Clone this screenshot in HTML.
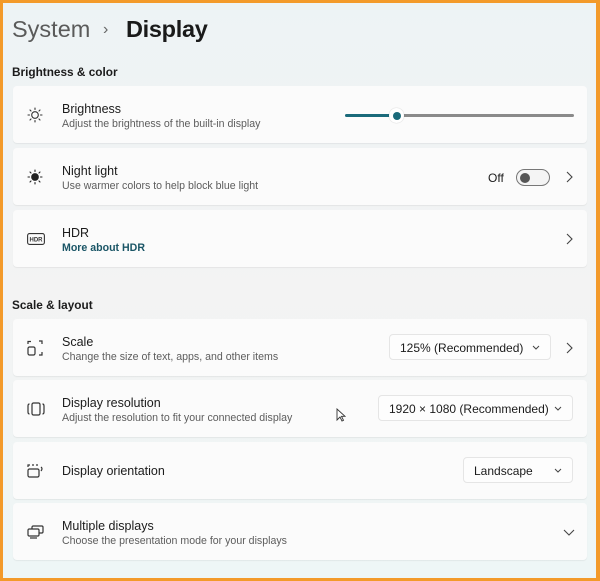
<!DOCTYPE html>
<html><head><meta charset="utf-8"><style>
*{margin:0;padding:0;box-sizing:border-box}
body{width:600px;height:581px;overflow:hidden;font-family:"Segoe UI","Liberation Sans",sans-serif;background:#f39a2a;position:relative}
.win{position:absolute;left:3px;top:3px;width:593px;height:575px;background:linear-gradient(180deg,#edf3f5 0%,#f3f3f3 50%,#eef6f6 100%);}
.t{position:absolute;white-space:nowrap}
.card{position:absolute;left:10px;width:574px;height:57px;background:#fbfbfb;border-radius:4px;box-shadow:0 1px 1px rgba(0,0,0,.06)}
.card .ic{position:absolute;left:14px;top:50%;transform:translateY(-50%)}
.card .ti{position:absolute;left:49px;font-size:12.5px;color:#1b1b1b}
.card .su{position:absolute;left:49px;font-size:10.6px;color:#5d5d5d}
.chev{position:absolute;right:14px;top:50%;transform:translateY(-50%)}
.dd{position:absolute;height:26px;background:#fdfdfd;border:1px solid #e5e5e5;border-radius:4px;font-size:12px;color:#1b1b1b;padding:6px 10px;top:15px}
.dd svg{position:absolute;right:10px;top:10px}
</style></head><body><div class="win">
<div class="t" style="left:9px;top:13px;font-size:23.5px;color:#5a5a5a">System</div>
<div class="t" style="left:100px;top:18px;font-size:16px;color:#666">›</div>
<div class="t" style="left:123px;top:13px;font-size:23.5px;color:#1a1a1a;font-weight:600;letter-spacing:-.3px">Display</div>
<div class="t" style="left:9px;top:62px;font-size:11.8px;color:#1b1b1b;font-weight:600">Brightness &amp; color</div>

<div class="card" style="top:83px">
<svg class="ic" width="16" height="16" viewBox="0 0 16 16" fill="none" stroke="#333" stroke-width="1.1"><circle cx="8" cy="8" r="3.3"/><path d="M8 1v1.5M8 13.5V15M1 8h1.5M13.5 8H15M3 3l1 1M12 12l1 1M3 13l1-1M12 4l1-1" stroke-linecap="round"/></svg>
<div class="ti" style="top:16px">Brightness</div><div class="su" style="top:32px">Adjust the brightness of the built-in display</div>
<div style="position:absolute;left:332px;top:28px;width:50px;height:3px;background:#1a6a7a;border-radius:2px"></div>
<div style="position:absolute;left:390px;top:28px;width:171px;height:3px;background:#8a8a8a;border-radius:2px"></div>
<div style="position:absolute;left:376px;top:22px;width:15px;height:15px;background:#fff;border-radius:50%;box-shadow:0 0 1px rgba(0,0,0,.3)"></div>
<div style="position:absolute;left:379.5px;top:25.5px;width:8px;height:8px;background:#1a6a7a;border-radius:50%"></div>
</div>

<div class="card" style="top:145px">
<svg class="ic" width="16" height="16" viewBox="0 0 16 16" fill="none" stroke="#222" stroke-width="1.1"><circle cx="8" cy="8" r="3.3" fill="#222"/><path d="M8 1v1.5M8 13.5V15M1 8h1.5M13.5 8H15M3 3l1 1M12 12l1 1M3 13l1-1M12 4l1-1" stroke-linecap="round"/></svg>
<div class="ti" style="top:16px">Night light</div><div class="su" style="top:32px">Use warmer colors to help block blue light</div>
<div class="t" style="left:475px;top:23px;font-size:12px;color:#1b1b1b">Off</div>
<div style="position:absolute;left:503px;top:21px;width:34px;height:17px;border:1px solid #777;border-radius:9px;background:#f4f4f4"></div>
<div style="position:absolute;left:507px;top:25px;width:10px;height:10px;border-radius:50%;background:#555"></div>
<svg class="chev" width="8" height="12" viewBox="0 0 8 12" fill="none" stroke="#444" stroke-width="1.1"><path d="M2 1l5 5-5 5"/></svg>
</div>

<div class="card" style="top:207px">
<svg class="ic" width="18" height="12" viewBox="0 0 18 12"><rect x=".6" y=".6" width="16.8" height="10.8" rx="2" fill="none" stroke="#333" stroke-width="1.1"/><text x="9" y="8.3" font-size="6" font-family="Liberation Sans" font-weight="bold" text-anchor="middle" fill="#333">HDR</text></svg>
<div class="ti" style="top:16px">HDR</div><div class="su" style="top:32px;color:#1a5566;font-weight:600">More about HDR</div>
<svg class="chev" width="8" height="12" viewBox="0 0 8 12" fill="none" stroke="#444" stroke-width="1.1"><path d="M2 1l5 5-5 5"/></svg>
</div>

<div class="t" style="left:9px;top:295px;font-size:11.8px;color:#1b1b1b;font-weight:600">Scale &amp; layout</div>

<div class="card" style="top:316px">
<svg class="ic" width="16" height="16" viewBox="0 0 16 16" fill="none" stroke="#333" stroke-width="1.2"><rect x="1" y="7" width="7" height="8" rx="1.5"/><path d="M1 4V1.5h3M12 1h3v3M15 12v3h-3"/></svg>
<div class="ti" style="top:16px">Scale</div><div class="su" style="top:32px">Change the size of text, apps, and other items</div>
<div class="dd" style="left:376px;width:162px;top:15px">125% (Recommended)<svg width="8" height="5" viewBox="0 0 8 5" fill="none" stroke="#444"><path d="M1 1l3 3 3-3"/></svg></div>
<svg class="chev" width="8" height="12" viewBox="0 0 8 12" fill="none" stroke="#444" stroke-width="1.1"><path d="M2 1l5 5-5 5"/></svg>
</div>

<div class="card" style="top:377px">
<svg class="ic" width="18" height="16" viewBox="0 0 18 16" fill="none" stroke="#333" stroke-width="1.2"><rect x="5" y="2" width="8" height="12" rx="1.5"/><path d="M2.5 3Q1 3 1 5v6q0 2 1.5 2M15.5 3q1.5 0 1.5 2v6q0 2-1.5 2"/></svg>
<div class="ti" style="top:16px">Display resolution</div><div class="su" style="top:32px">Adjust the resolution to fit your connected display</div>
<div class="dd" style="left:365px;width:195px;top:15px">1920 × 1080 (Recommended)<svg width="8" height="5" viewBox="0 0 8 5" fill="none" stroke="#444"><path d="M1 1l3 3 3-3"/></svg></div>
<svg style="position:absolute;left:323px;top:28px" width="10" height="14" viewBox="0 0 10 14"><path d="M1 1v11l3-3 2 4 1.5-.7-2-4H9z" fill="#fff" stroke="#333" stroke-width=".9"/></svg>
</div>

<div class="card" style="top:439px">
<svg class="ic" width="18" height="14" viewBox="0 0 18 14" fill="none" stroke="#333" stroke-width="1.2"><rect x="1" y="5" width="11" height="8" rx="1.5"/><path d="M1 3V1h2M5 1h2M9 1h2M14 3q2 1.5 0 4"/></svg>
<div class="ti" style="top:22px">Display orientation</div>
<div class="dd" style="left:450px;width:110px;top:15px">Landscape<svg width="8" height="5" viewBox="0 0 8 5" fill="none" stroke="#444"><path d="M1 1l3 3 3-3"/></svg></div>
</div>

<div class="card" style="top:500px">
<svg class="ic" width="18" height="14" viewBox="0 0 18 14" fill="none" stroke="#333" stroke-width="1.2"><rect x="5" y="1" width="11" height="7" rx="1.2"/><rect x="1" y="4" width="11" height="7" rx="1.2" fill="#fbfbfb"/><path d="M3 13h7"/></svg>
<div class="ti" style="top:16px">Multiple displays</div><div class="su" style="top:32px">Choose the presentation mode for your displays</div>
<svg class="chev" width="12" height="8" viewBox="0 0 12 8" fill="none" stroke="#444" stroke-width="1.1" style="right:12px"><path d="M1 2l5 5 5-5"/></svg>
</div>
</div></body></html>
